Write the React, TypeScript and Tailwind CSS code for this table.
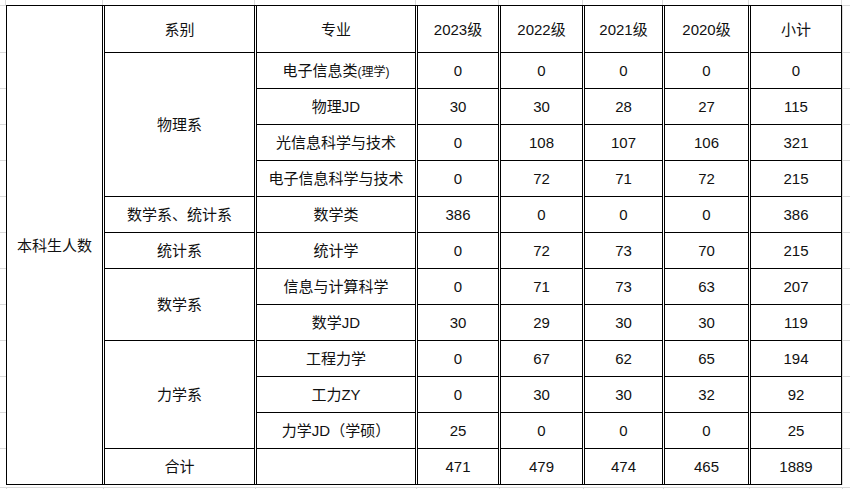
import React from "react";

type Row = { dept?: string; span?: number; major: React.ReactNode; nums: (number | string)[] };

const spanClass: Record<number, string> = {
  1: "row-span-1",
  2: "row-span-2",
  3: "row-span-3",
  4: "row-span-4",
};

const rows: Row[] = [
  { dept: "物理系", span: 4, major: <>电子信息类<span className="text-[12px]">(理学)</span></>, nums: [0, 0, 0, 0, 0] },
  { major: "物理JD", nums: [30, 30, 28, 27, 115] },
  { major: "光信息科学与技术", nums: [0, 108, 107, 106, 321] },
  { major: "电子信息科学与技术", nums: [0, 72, 71, 72, 215] },
  { dept: "数学系、统计系", span: 1, major: "数学类", nums: [386, 0, 0, 0, 386] },
  { dept: "统计系", span: 1, major: "统计学", nums: [0, 72, 73, 70, 215] },
  { dept: "数学系", span: 2, major: "信息与计算科学", nums: [0, 71, 73, 63, 207] },
  { major: "数学JD", nums: [30, 29, 30, 30, 119] },
  { dept: "力学系", span: 3, major: "工程力学", nums: [0, 67, 62, 65, 194] },
  { major: "工力ZY", nums: [0, 30, 30, 32, 92] },
  { major: "力学JD（学硕）", nums: [25, 0, 0, 0, 25] },
  { dept: "合计", span: 1, major: "", nums: [471, 479, 474, 465, 1889] },
];

const headers = ["系别", "专业", "2023级", "2022级", "2021级", "2020级", "小计"];

// widths of the gray sheet columns outside the table (line sits on the left edge)
const sheetCols = [97, 152, 161, 83, 84, 80, 86, 93];

function Cell({ children, top = true, className = "" }: { children?: React.ReactNode; top?: boolean; className?: string }) {
  return (
    <div
      className={`flex items-center justify-center border-x border-black pt-[2px] ${top ? "border-t" : ""} ${className}`}
    >
      {children}
    </div>
  );
}

function HStrip() {
  return (
    <div className="flex h-full">
      {sheetCols.map((w, i) => (
        <div key={i} className="h-full shrink-0 border-l border-[#dadada]" style={{ width: w }} />
      ))}
      <div className="h-full flex-1 border-l border-[#dadada]" />
    </div>
  );
}

function VStrip() {
  return (
    <div className="flex h-full flex-col">
      <div className="h-[47px] shrink-0 border-t border-[#dadada]" />
      {Array.from({ length: 12 }).map((_, i) => (
        <div key={i} className="h-[36px] shrink-0 border-t border-[#dadada]" />
      ))}
    </div>
  );
}

export default function App() {
  return (
    <div className="grid h-[489px] w-[850px] grid-cols-[6px_836px_1fr] grid-rows-[5px_480px_1fr] overflow-hidden bg-white font-['Liberation_Sans','Noto_Sans_CJK_SC',sans-serif] text-[15px] text-[#111]">
      <div />
      <div className="col-span-2 -ml-px">
        <HStrip />
      </div>

      <VStrip />

      <div className="grid grid-cols-[97px_151px_160px_82px_83px_79px_85px_92px] grid-rows-[46px_repeat(12,36px)] gap-x-px border-y border-black">
        <Cell top={false} className="row-span-13">本科生人数</Cell>
        {headers.map((h) => (
          <Cell key={h} top={false}>{h}</Cell>
        ))}
        {rows.map((r, i) => (
          <React.Fragment key={i}>
            {r.dept && <Cell className={spanClass[r.span ?? 1]}>{r.dept}</Cell>}
            <Cell>{r.major}</Cell>
            {r.nums.map((n, j) => (
              <Cell key={j}>{n}</Cell>
            ))}
          </React.Fragment>
        ))}
      </div>

      <div className="border-l border-[#dadada]">
        <VStrip />
      </div>

      <div className="col-span-3 pt-[2px]">
        <div className="h-full border-t border-[#dadada] pl-[6px]">
          <HStrip />
        </div>
      </div>
    </div>
  );
}
